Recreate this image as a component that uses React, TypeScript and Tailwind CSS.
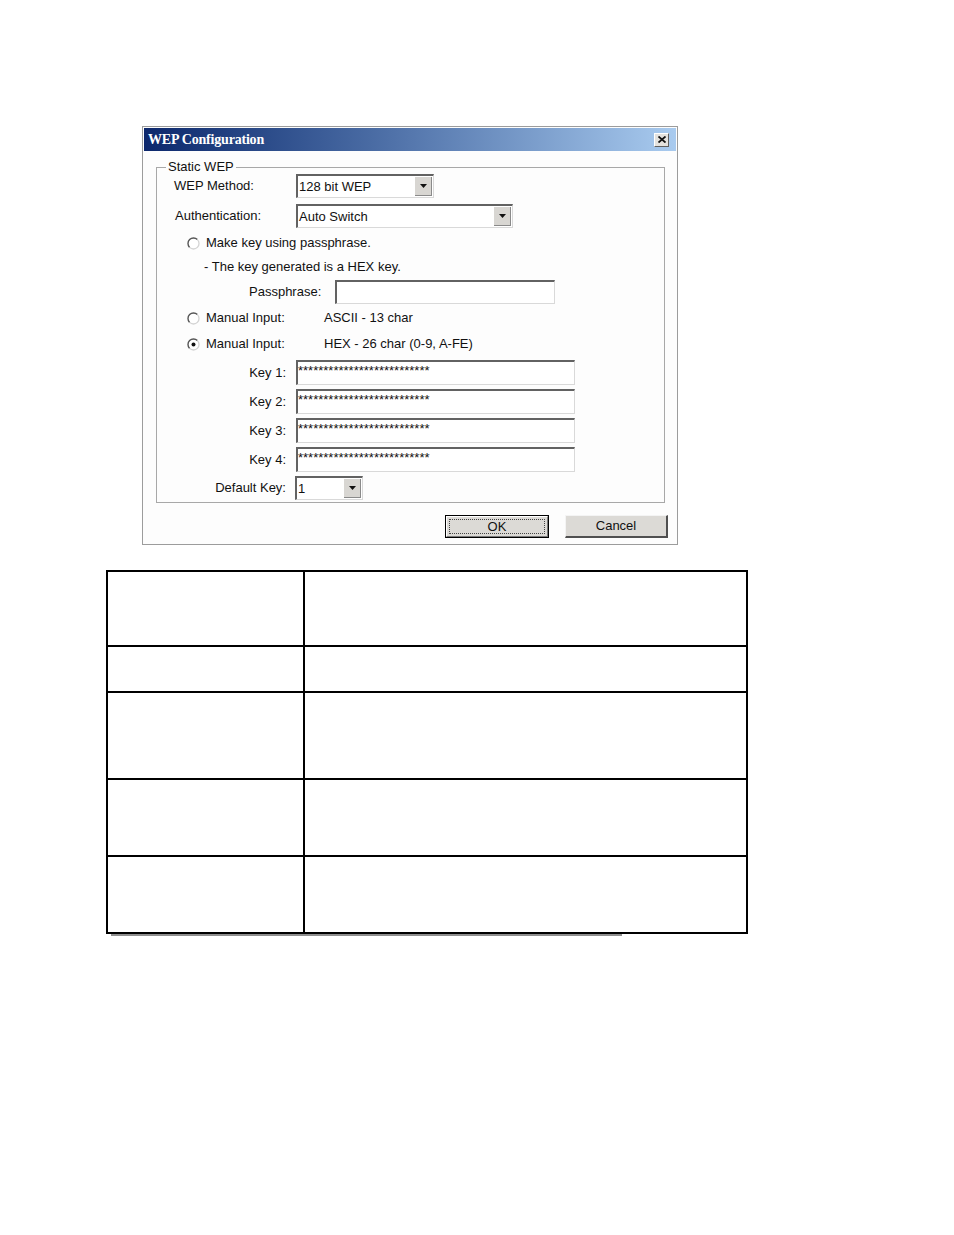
import React from 'react';

const Arrow: React.FC = () => (
  <svg width="7" height="4" viewBox="0 0 7 4">
    <path d="M0 0 H7 L3.5 4 Z" fill="#111" />
  </svg>
);

const Radio: React.FC<{ checked?: boolean }> = ({ checked }) => (
  <svg width="13" height="13" viewBox="0 0 13 13" className="shrink-0">
    <circle cx="6.5" cy="6.5" r="5.5" fill="#fff" />
    <path d="M2.6 10.4 A5.5 5.5 0 0 1 10.4 2.6" fill="none" stroke="#555" strokeWidth="1.4" />
    <path d="M10.4 2.6 A5.5 5.5 0 0 1 2.6 10.4" fill="none" stroke="#d4d4d4" strokeWidth="1.3" />
    {checked && <circle cx="6.5" cy="6.5" r="2" fill="#111" />}
  </svg>
);

const Field: React.FC<{ className?: string; children?: React.ReactNode }> = ({ className = '', children }) => (
  <div
    className={`bg-white border-t-2 border-l-2 border-t-[#626262] border-l-[#626262] border-b border-r border-b-[#d9d9d9] border-r-[#d9d9d9] ${className}`}
  >
    {children}
  </div>
);

const Select: React.FC<{ value: string; className: string }> = ({ value, className }) => (
  <Field className={`flex items-stretch h-[24px] ${className}`}>
    <div className="flex-1 flex items-center pl-[1px]">{value}</div>
    <div className="w-[17px] my-[1px] mr-[1px] bg-[#d8d6d2] border-r border-b border-[#8a8a8a] flex items-center justify-center">
      <Arrow />
    </div>
  </Field>
);

const stars = '**************************';

const App: React.FC = () => {
  return (
    <div className="w-[954px] h-[1235px] bg-white overflow-hidden font-['Liberation_Sans',Arial,sans-serif] text-[13px] text-[#111]">
      {/* dialog */}
      <div className="ml-[142px] mt-[126px] w-[536px] h-[419px] border border-[#9c9c9c] bg-[#fdfdfd] p-[1px] flex flex-col">
        <div className="h-[23px] bg-linear-to-r from-[#0c276c] to-[#a9cbef] flex items-center justify-between pl-[4px] pr-[7px]">
          <span className="font-['Liberation_Serif',serif] font-bold text-[14px] text-white tracking-[-0.2px]">
            WEP Configuration
          </span>
          <div className="w-[15px] h-[14px] bg-[#e4e2de] border-t border-l border-white border-r border-b border-r-[#606060] border-b-[#606060] flex items-center justify-center">
            <svg width="8" height="7" viewBox="0 0 8 7">
              <path d="M0.5 0.5 L7.5 6.5 M7.5 0.5 L0.5 6.5" stroke="#111" strokeWidth="1.8" />
            </svg>
          </div>
        </div>

        {/* group box */}
        <div className="relative mt-[16px] ml-[12px] mr-[11px] h-[336px] border border-[#a8a8a8] flex flex-col">
          <span className="absolute left-[9px] -top-[9px] bg-[#fdfdfd] px-[2px] leading-[16px]">Static WEP</span>

          <div className="mt-[6px] h-[24px] flex items-center pl-[17px]">
            <span className="w-[122px]">WEP Method:</span>
            <Select value="128 bit WEP" className="w-[138px]" />
          </div>
          <div className="mt-[6px] h-[24px] flex items-center pl-[18px]">
            <span className="w-[121px]">Authentication:</span>
            <Select value="Auto Switch" className="w-[217px]" />
          </div>

          <div className="mt-[6px] h-[18px] flex items-center pl-[30px]">
            <Radio />
            <span className="ml-[6px]">Make key using passphrase.</span>
          </div>
          <div className="mt-[6px] h-[18px] flex items-center pl-[47px]">- The key generated is a HEX key.</div>
          <div className="mt-[4px] h-[24px] flex items-center pl-[92px]">
            <span className="w-[86px]">Passphrase:</span>
            <Field className="w-[220px] h-[24px]" />
          </div>

          <div className="mt-[5px] h-[18px] flex items-center pl-[30px]">
            <Radio />
            <span className="ml-[6px] w-[118px]">Manual Input:</span>
            <span>ASCII - 13 char</span>
          </div>
          <div className="mt-[8px] h-[18px] flex items-center pl-[30px]">
            <Radio checked />
            <span className="ml-[6px] w-[118px]">Manual Input:</span>
            <span>HEX - 26 char (0-9, A-FE)</span>
          </div>

          {[1, 2, 3, 4].map((n, i) => (
            <div key={n} className={`${i === 0 ? 'mt-[7px]' : 'mt-[4px]'} h-[25px] flex items-center`}>
              <span className="w-[129px] text-right">Key {n}:</span>
              <Field className="ml-[10px] w-[279px] h-[25px] leading-[18px]">{stars}</Field>
            </div>
          ))}

          <div className="mt-[4px] h-[24px] flex items-center">
            <span className="w-[129px] text-right">Default Key:</span>
            <Select value="1" className="ml-[9px] w-[68px]" />
          </div>
        </div>

        {/* buttons */}
        <div className="mt-[12px] flex justify-end gap-[16px] pr-[8px]">
          <div className="w-[104px] h-[23px] border border-black">
            <div className="h-full bg-[#dcdad6] border-t border-l border-white border-r border-b border-r-[#7a7a7a] border-b-[#7a7a7a] p-[2px]">
              <div className="h-full border border-dotted border-[#444] flex items-center justify-center">OK</div>
            </div>
          </div>
          <div className="w-[103px] h-[23px] bg-[#dcdad6] border-t border-l border-[#f4f4f4] border-r-2 border-b-2 border-r-[#505050] border-b-[#505050] flex items-center justify-center">
            Cancel
          </div>
        </div>
      </div>

      {/* table */}
      <div className="mt-[25px] ml-[106px] w-[642px] border-2 border-black">
        {[75, 46, 87, 77, 75].map((h, i) => (
          <div
            key={i}
            className={`grid grid-cols-[197px_1fr] ${i < 4 ? 'border-b-2 border-black' : ''}`}
            style={{ height: h }}
          >
            <div className="border-r-2 border-black" />
            <div />
          </div>
        ))}
      </div>
      <div className="ml-[111px] w-[511px] h-[2px] bg-[#8e8e8e]" />
    </div>
  );
};

export default App;
